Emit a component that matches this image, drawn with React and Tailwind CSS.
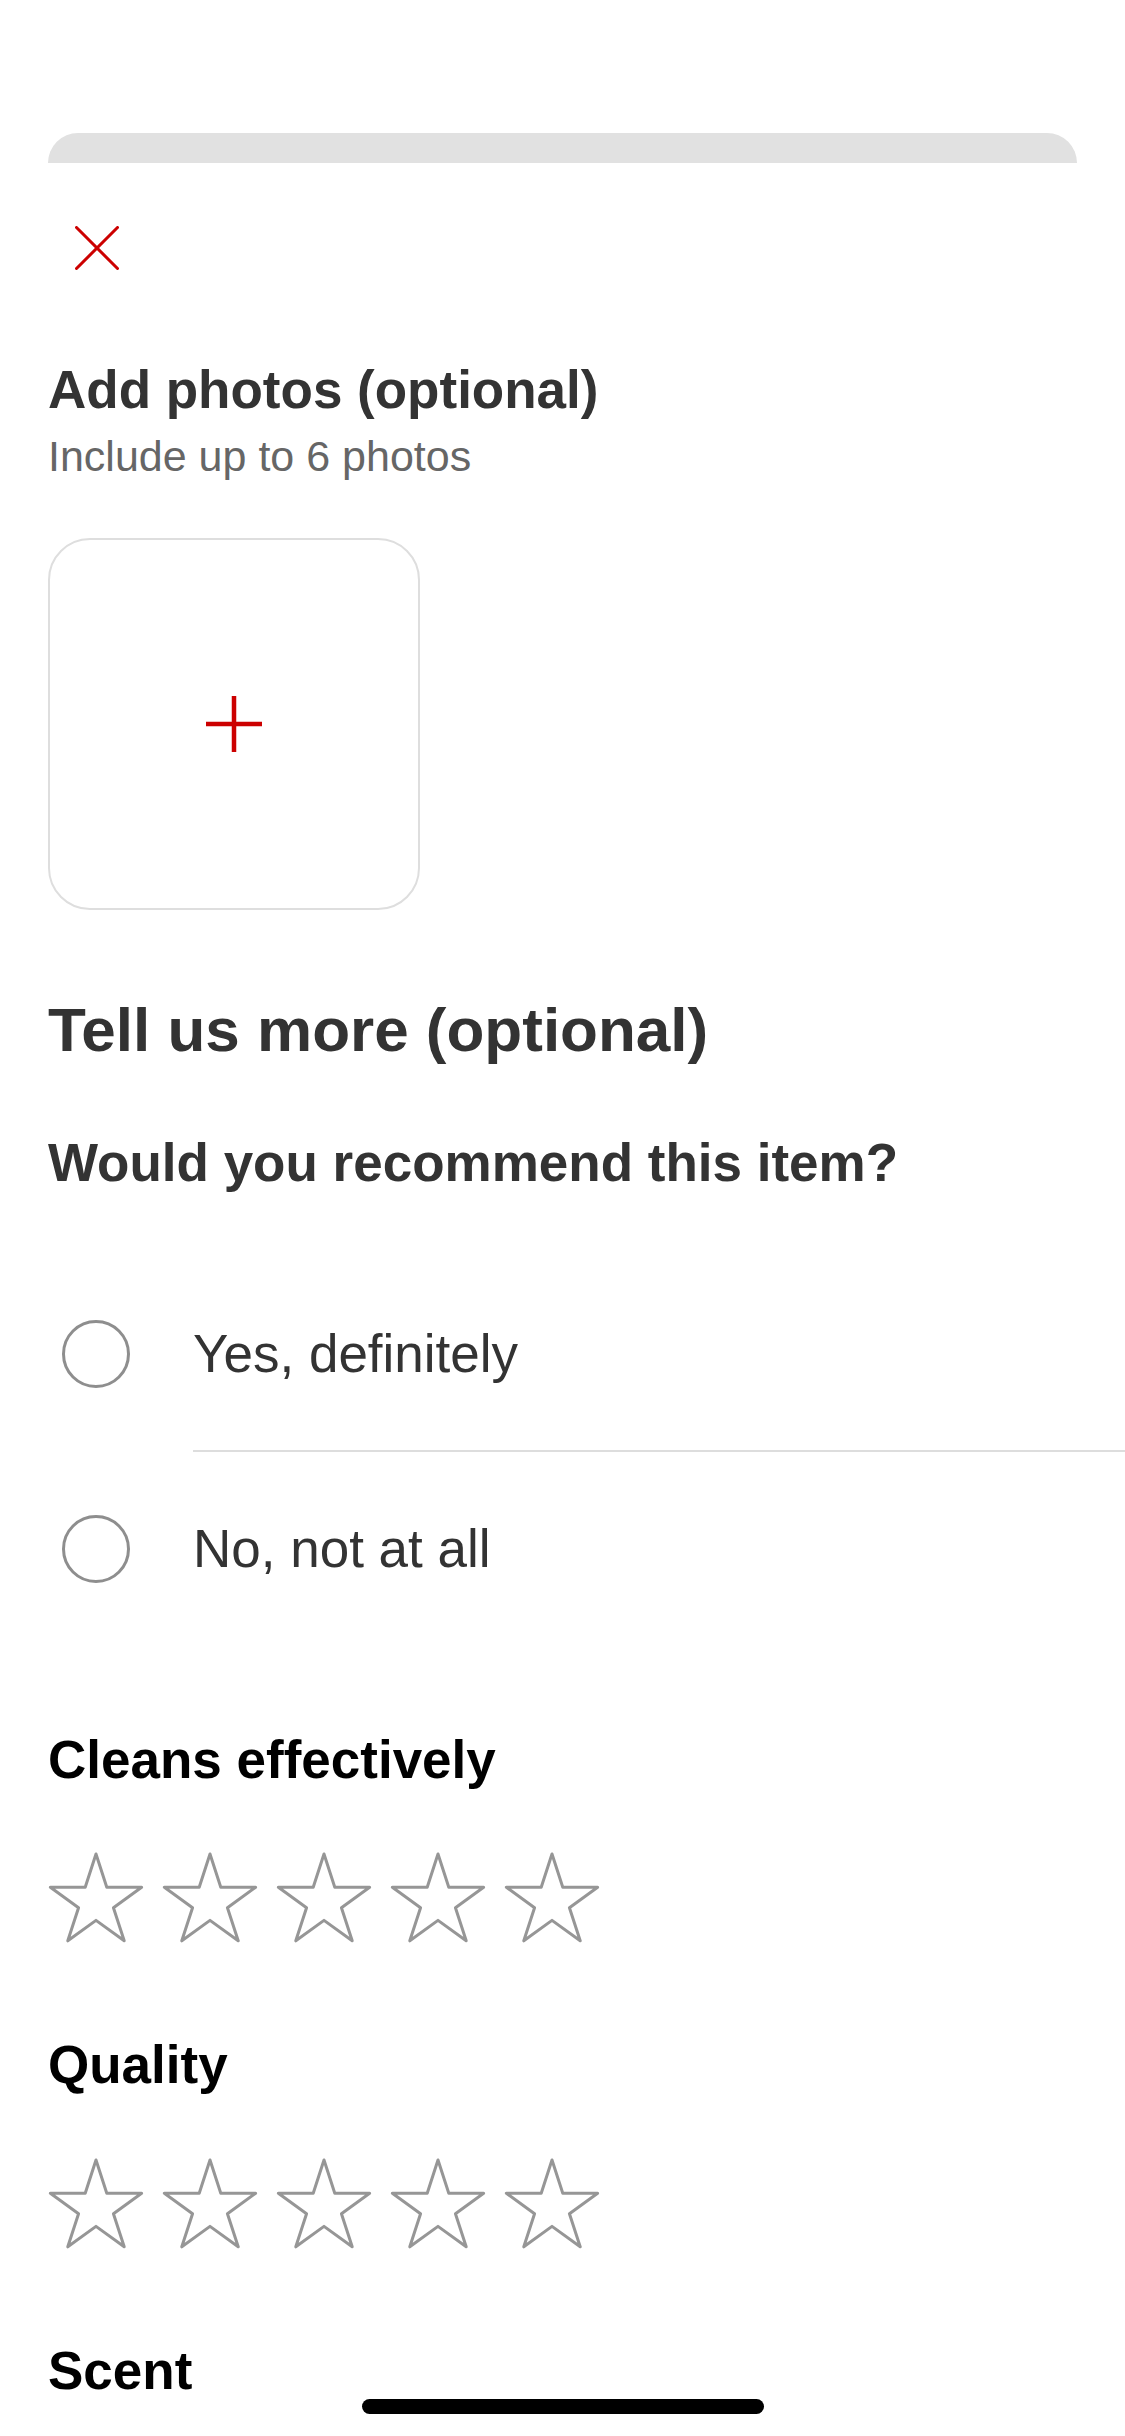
import React from "react";

const STAR_POINTS = (() => {
  const cx = 48;
  const cy = 50;
  const outer = 48;
  const inner = outer * 0.382;
  const pts = [];
  for (let i = 0; i < 10; i++) {
    const a = ((-90 + i * 36) * Math.PI) / 180;
    const r = i % 2 === 0 ? outer : inner;
    pts.push(`${(cx + r * Math.cos(a)).toFixed(2)},${(cy + r * Math.sin(a)).toFixed(2)}`);
  }
  return pts.join(" ");
})();

function Star() {
  return (
    <svg width="96" height="92" viewBox="0 0 96 92" className="overflow-visible">
      <polygon points={STAR_POINTS} fill="none" stroke="#969696" strokeWidth="3" strokeLinejoin="round" />
    </svg>
  );
}

function StarRow({ className = "" }) {
  return (
    <div className={`flex gap-[18px] ${className}`}>
      {[0, 1, 2, 3, 4].map((i) => (
        <Star key={i} />
      ))}
    </div>
  );
}

function Radio({ label }) {
  return (
    <div className="flex h-[193px] items-center">
      <div className="ml-[14px] h-[68px] w-[68px] rounded-full border-[3px] border-[#8e8e8e]" />
      <span className="ml-[63px] text-[53px] leading-[60px] text-[#333333]">{label}</span>
    </div>
  );
}

export default function App() {
  return (
    <div className="relative h-[2436px] w-[1125px] overflow-hidden bg-white font-['Liberation_Sans',Arial,sans-serif]">
      {/* stacked sheet behind */}
      <div className="mx-[48px] mt-[133px] h-[30px] rounded-t-[30px] bg-[#e1e1e1]" />

      <div className="pl-[48px]">
        {/* close */}
        <button className="ml-[27px] mt-[63px] block">
          <svg width="44" height="44" viewBox="0 0 44 44">
            <path d="M1.5 1.5 L42.5 42.5 M42.5 1.5 L1.5 42.5" stroke="#cc0000" strokeWidth="3" strokeLinecap="round" />
          </svg>
        </button>

        <h2 className="mt-[90px] text-[53px] font-bold leading-[60px] text-[#333333]">Add photos (optional)</h2>
        <p className="mt-[11px] text-[43px] leading-[50px] text-[#666666]">Include up to 6 photos</p>

        <button className="mt-[57px] flex h-[372px] w-[372px] items-center justify-center rounded-[42px] border-2 border-[#dedede]">
          <svg width="56" height="56" viewBox="0 0 56 56">
            <path d="M28 0 V56 M0 28 H56" stroke="#cc0000" strokeWidth="4.5" />
          </svg>
        </button>

        <h2 className="mt-[85px] text-[62px] font-bold leading-[70px] text-[#333333]">Tell us more (optional)</h2>

        <h3 className="mt-[68px] text-[53px] font-bold leading-[60px] text-[#333333]">Would you recommend this item?</h3>

        <div className="mt-[64px]">
          <Radio label="Yes, definitely" />
          <div className="ml-[145px] h-[2px] bg-[#dddddd]" />
          <Radio label="No, not at all" />
        </div>

        <h3 className="mt-[85px] text-[53px] font-bold leading-[60px] text-black">Cleans effectively</h3>
        <StarRow className="mt-[62px]" />

        <h3 className="mt-[91px] text-[53px] font-bold leading-[60px] text-black">Quality</h3>
        <StarRow className="mt-[63px]" />

        <h3 className="mt-[91px] text-[53px] font-bold leading-[60px] text-black">Scent</h3>
        <StarRow className="mt-[63px]" />
      </div>

      {/* home indicator */}
      <div className="absolute left-[362px] top-[2399px] h-[15px] w-[402px] rounded-full bg-black" />
    </div>
  );
}
